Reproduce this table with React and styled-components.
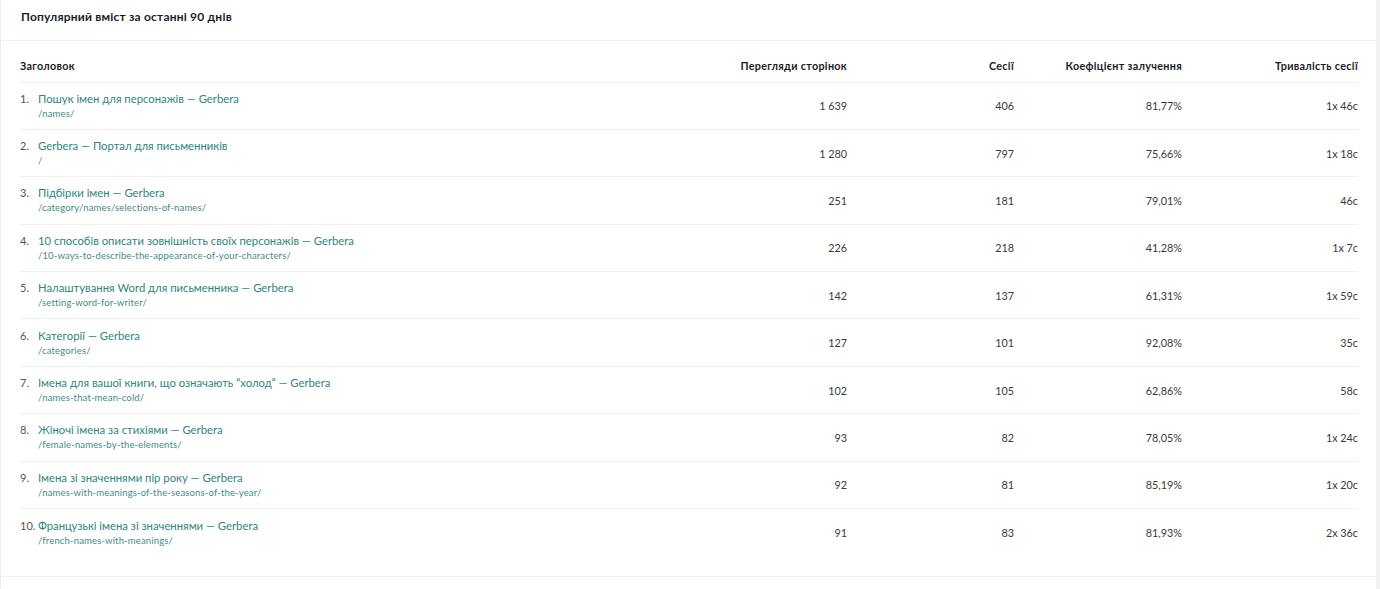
import styled, { createGlobalStyle } from "styled-components";

const GlobalStyle = createGlobalStyle`
  html, body {
    margin: 0;
    padding: 0;
    background: #f1f1f2;
  }
  body {
    font-family: Lato, "Noto Sans", sans-serif;
    -webkit-font-smoothing: antialiased;
  }
`;

const Card = styled.section`
  width: 1375px;
  min-height: 589px;
  background: #fff;
  border-left: 1px solid #ececec;
`;

const CardHeader = styled.header`
  height: 41px;
  padding: 0 20px 7px;
  display: flex;
  align-items: center;
  border-bottom: 1px solid #f0f0f0;
  box-sizing: border-box;
`;

const CardTitle = styled.h2`
  margin: 0;
  font-size: 12px;
  font-weight: 700;
  color: #1d1d1f;
  letter-spacing: 0.2px;
`;

const TableWrap = styled.div`
  padding: 0 18px 20px 19px;
  border-bottom: 1px solid #f0f0f0;
`;

const Row = styled.div`
  display: grid;
  grid-template-columns: 1fr 200px 167px 168px 176px;
  align-items: center;
  height: ${(p) => (p.$head ? "41.5px" : "47.4px")};
  box-sizing: border-box;
  border-bottom: ${(p) => (p.$last ? "none" : "1px solid #f0f0f0")};
  padding-top: ${(p) => (p.$head ? "8px" : "0")};
`;

const HeadCell = styled.div`
  font-size: 10.8px;
  font-weight: 700;
  color: #1d1d1f;
  text-align: ${(p) => (p.$left ? "left" : "right")};
  letter-spacing: 0.3px;
`;

const TitleCell = styled.div`
  display: flex;
  align-items: flex-start;
`;

const Index = styled.span`
  width: 18px;
  flex: none;
  font-size: 11px;
  color: #555;
  line-height: 15px;
`;

const PageInfo = styled.div`
  display: flex;
  flex-direction: column;
`;

const PageTitle = styled.a`
  font-size: 11.3px;
  line-height: 15px;
  color: #2d877d;
  text-decoration: none;
`;

const PageUrl = styled.span`
  font-size: 9.5px;
  line-height: 15px;
  color: #3f8c83;
  letter-spacing: 0.15px;
`;

const NumCell = styled.div`
  font-size: 10.8px;
  color: #3a3a3a;
  text-align: right;
`;

const rows = [
  ["Пошук імен для персонажів — Gerbera", "/names/", "1 639", "406", "81,77%", "1х 46с"],
  ["Gerbera — Портал для письменників", "/", "1 280", "797", "75,66%", "1х 18с"],
  ["Підбірки імен — Gerbera", "/category/names/selections-of-names/", "251", "181", "79,01%", "46с"],
  ["10 способів описати зовнішність своїх персонажів — Gerbera", "/10-ways-to-describe-the-appearance-of-your-characters/", "226", "218", "41,28%", "1х 7с"],
  ["Налаштування Word для письменника — Gerbera", "/setting-word-for-writer/", "142", "137", "61,31%", "1х 59с"],
  ["Категорії — Gerbera", "/categories/", "127", "101", "92,08%", "35с"],
  ["Імена для вашої книги, що означають “холод” — Gerbera", "/names-that-mean-cold/", "102", "105", "62,86%", "58с"],
  ["Жіночі імена за стихіями — Gerbera", "/female-names-by-the-elements/", "93", "82", "78,05%", "1х 24с"],
  ["Імена зі значеннями пір року — Gerbera", "/names-with-meanings-of-the-seasons-of-the-year/", "92", "81", "85,19%", "1х 20с"],
  ["Французькі імена зі значеннями — Gerbera", "/french-names-with-meanings/", "91", "83", "81,93%", "2х 36с"],
];

export default function App() {
  return (
    <>
      <GlobalStyle />
      <Card>
        <CardHeader>
          <CardTitle>Популярний вміст за останні 90 днів</CardTitle>
        </CardHeader>
        <TableWrap>
          <Row $head>
            <HeadCell $left>Заголовок</HeadCell>
            <HeadCell>Перегляди сторінок</HeadCell>
            <HeadCell>Сесії</HeadCell>
            <HeadCell>Коефіцієнт залучення</HeadCell>
            <HeadCell>Тривалість сесії</HeadCell>
          </Row>
          {rows.map((r, i) => (
            <Row key={i} $last={i === rows.length - 1}>
              <TitleCell>
                <Index>{i + 1}.</Index>
                <PageInfo>
                  <PageTitle href="#">{r[0]}</PageTitle>
                  <PageUrl>{r[1]}</PageUrl>
                </PageInfo>
              </TitleCell>
              <NumCell>{r[2]}</NumCell>
              <NumCell>{r[3]}</NumCell>
              <NumCell>{r[4]}</NumCell>
              <NumCell>{r[5]}</NumCell>
            </Row>
          ))}
        </TableWrap>
      </Card>
    </>
  );
}
